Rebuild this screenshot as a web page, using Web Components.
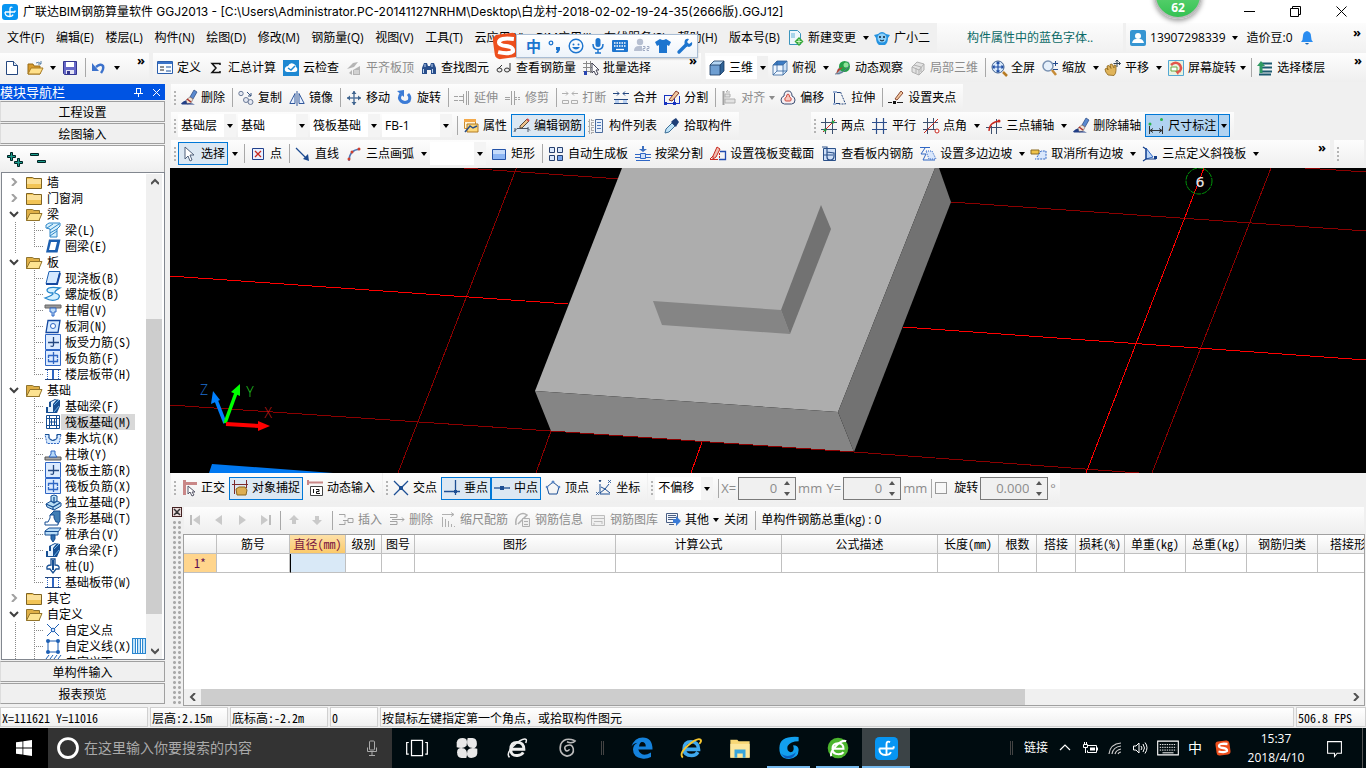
<!DOCTYPE html>
<html lang="zh-CN">
<head>
<meta charset="utf-8">
<title>广联达BIM钢筋算量软件 GGJ2013</title>
<style>
    body {
        margin: 0;
        height: 100vh;
        display: flex;
        flex-direction: column;
        overflow: hidden;
        background: #f0f0f0;
        color: #000;
        font: 12px/16px "Open Sans", "Noto Sans CJK SC", sans-serif;
        --song: "Noto Sans Mono CJK SC", "Noto Sans CJK SC", "Liberation Mono", monospace;
    }
    .bars {
        display: flex;
        flex-direction: column;
        gap: 1px;
        flex: none;
    }
    .bar {
        display: flex;
        gap: 4px;
        height: 27px;
    }
    .top {
        height: 29px;
        padding-bottom: 2px;
        align-items: stretch;
    }
    .first { min-width: 149px; }
    .second { min-width: 548px; }
    .work {
        flex: 1;
        min-height: 0;
        display: flex;
        gap: 6px;
    }
    .stage {
        flex: 1;
        min-width: 0;
        display: flex;
        flex-direction: column;
    }
    .wide { flex: 1; }
</style>
</head>
<body>

<title-bar>广联达BIM钢筋算量软件 GGJ2013 - [C:\Users\Administrator.PC-20141127NRHM\Desktop\白龙村-2018-02-02-19-24-35(2666版).GGJ12]</title-bar>

<menu-bar></menu-bar>

<div class="bar top">
    <tool-strip plain more class="first">
        <tool-button icon="new" label="新建"></tool-button>
        <tool-button icon="open" label="打开" menu></tool-button>
        <tool-button icon="save" label="保存"></tool-button>
        <tool-sep></tool-sep>
        <tool-button icon="undo" label="撤销" menu></tool-button>
    </tool-strip>
    <tool-strip plain more class="second">
        <tool-button icon="define">定义</tool-button>
        <tool-button icon="sum">汇总计算</tool-button>
        <tool-button icon="cloud">云检查</tool-button>
        <tool-button icon="flush" disabled>平齐板顶</tool-button>
        <tool-button icon="find">查找图元</tool-button>
        <tool-button icon="glasses">查看钢筋量</tool-button>
        <tool-button icon="batch">批量选择</tool-button>
    </tool-strip>
    <tool-strip plain more class="wide">
        <tool-button icon="cube" menu white>三维</tool-button>
        <tool-button icon="cubetop" menu>俯视</tool-button>
        <tool-button icon="orbit">动态观察</tool-button>
        <tool-button icon="part3d" disabled>局部三维</tool-button>
        <tool-sep></tool-sep>
        <tool-button icon="full">全屏</tool-button>
        <tool-button icon="zoom" menu>缩放</tool-button>
        <tool-button icon="pan" menu>平移</tool-button>
        <tool-button icon="spin" menu tight>屏幕旋转</tool-button>
        <tool-sep></tool-sep>
        <tool-button icon="floors">选择楼层</tool-button>
    </tool-strip>
</div>

<div class="work">
    <nav-panel></nav-panel>
    <main class="stage">
        <div class="bars">
            <div class="bar">
                <tool-strip>
                    <tool-button icon="brush">删除</tool-button>
                    <tool-sep></tool-sep>
                    <tool-button icon="copy">复制</tool-button>
                    <tool-button icon="mirror">镜像</tool-button>
                    <tool-sep></tool-sep>
                    <tool-button icon="move">移动</tool-button>
                    <tool-button icon="rotate">旋转</tool-button>
                    <tool-sep></tool-sep>
                    <tool-button icon="extend" disabled>延伸</tool-button>
                    <tool-button icon="trim" disabled>修剪</tool-button>
                    <tool-sep></tool-sep>
                    <tool-button icon="break" disabled>打断</tool-button>
                    <tool-button icon="merge">合并</tool-button>
                    <tool-button icon="split">分割</tool-button>
                    <tool-sep></tool-sep>
                    <tool-button icon="align" menu tight disabled>对齐</tool-button>
                    <tool-button icon="offset">偏移</tool-button>
                    <tool-button icon="stretch">拉伸</tool-button>
                    <tool-sep></tool-sep>
                    <tool-button icon="grip">设置夹点</tool-button>
                </tool-strip>
            </div>
            <div class="bar axes">
                <tool-strip>
                    <tool-combo label="楼层" value="基础层" size="58"></tool-combo>
                    <tool-combo label="构件类型" value="基础" size="70"></tool-combo>
                    <tool-combo label="构件" value="筏板基础" size="70"></tool-combo>
                    <tool-combo label="构件名称" value="FB-1" size="70"></tool-combo>
                    <tool-sep></tool-sep>
                    <tool-button icon="props">属性</tool-button>
                    <tool-button icon="editbar" checked>编辑钢筋</tool-button>
                    <tool-button icon="list">构件列表</tool-button>
                    <tool-button icon="pick">拾取构件</tool-button>
                </tool-strip>
                <tool-strip style="margin-left: 68px">
                    <tool-button icon="twopt">两点</tool-button>
                    <tool-button icon="parallel">平行</tool-button>
                    <tool-button icon="ptangle" menu>点角</tool-button>
                    <tool-button icon="arcaxis" menu>三点辅轴</tool-button>
                    <tool-button icon="brush">删除辅轴</tool-button>
                    <tool-button icon="dim" menu hot>尺寸标注</tool-button>
                </tool-strip>
            </div>
            <div class="bar">
                <tool-strip more style="flex: 1">
                    <tool-button icon="cursor" checked menu>选择</tool-button>
                    <tool-sep></tool-sep>
                    <tool-button icon="point">点</tool-button>
                    <tool-sep></tool-sep>
                    <tool-button icon="line">直线</tool-button>
                    <tool-button icon="arc" menu>三点画弧</tool-button>
                    <tool-combo label="画弧方式" value="" size="56"></tool-combo>
                    <tool-button icon="rect">矩形</tool-button>
                    <tool-sep></tool-sep>
                    <tool-button icon="autoslab">自动生成板</tool-button>
                    <tool-button icon="bybeam">按梁分割</tool-button>
                    <tool-button icon="section">设置筏板变截面</tool-button>
                    <tool-button icon="viewbar">查看板内钢筋</tool-button>
                    <tool-button icon="slope" menu>设置多边边坡</tool-button>
                    <tool-button icon="noslope" menu>取消所有边坡</tool-button>
                    <tool-button icon="tilt" menu>三点定义斜筏板</tool-button>
                </tool-strip>
                <tool-strip style="width: 30px; margin-right: 2px"></tool-strip>
            </div>
        </div>
        <model-view></model-view>
        <snap-bar></snap-bar>
        <rebar-dock></rebar-dock>
    </main>
</div>

<status-bar></status-bar>
<task-bar></task-bar>
<ime-bar></ime-bar>
<speed-ball>62</speed-ball>

<script>
// 图标库: 16x16 的 SVG 片段
const N = '#24477f', B = '#2f66c4', R = '#c8281e';
const BOX = `<path d="M.5.5h15v15H.5z" fill="#dcebff" stroke="${B}"/>`;
const BEAM = '<path d="M1 15v-6h3V4l6-3 5 1v6l-3 7z" fill="#174f93"/><path d="M3 14V9h3V4l6-3-4 5v8z" fill="#e5f3ff"/><path d="M9 14l5-6M9 7l5-5" stroke="#68b1e8"/>';
const ICONS = {
    app: '<rect width="16" height="16" rx="3" fill="#0795f2"/><path d="M8 12.500V5q0-2.500 2.500-1.500M3 8h10M3 8q0 4.500 4.500 4.500 3 0 3.500-2M13 8V6.500" fill="none" stroke="#fff" stroke-width="1.300"/>',
    new: `<path d="M2.500 1.500h7l4 4v9h-11z" fill="#fff" stroke="${N}"/><path d="M9.500 1.500v4h4" fill="#dfeaf8" stroke="${N}"/>`,
    open: '<path d="M1 4h5l1 2h6v8H1z" fill="#d79b2d" stroke="#986b14"/><path d="M1 14l3-6h12l-3 6z" fill="#ffe08a" stroke="#a87b22"/><path d="M9 3q3-2 5 1m0-3v3h-3" fill="none" stroke="#5780a8"/>',
    save: '<path d="M1.500 1.500h13v13h-12l-1-1z" fill="#6668c8" stroke="#34368f"/><path d="M4 2h8v5H4z" fill="#fff"/><path d="M4 10h8v4H4z" fill="#e4e4f4"/><path d="M5 11h3v3H5z" fill="#34368f"/>',
    undo: '<path d="M5 7q5-4 7-1 1 3-2 7" fill="none" stroke="#3c72cc" stroke-width="2.500"/><path d="M1 3v8h7z" fill="#3c72cc"/>',
    define: '<path d="M.5 1.500h15v12H.5z" fill="#f8fbff" stroke="#2b5fae"/><path d="M1 2h14v2H1z" fill="#3a73c8"/><path d="M3 7h4M3 10h4" stroke="#222"/><path d="M9 6h5v2H9zm0 4h5v2H9z" fill="#8aa6cc"/>',
    sum: '<path d="M12 5V3.500H4L8 8l-4 4.500h8V11" fill="none" stroke="#111" stroke-width="1.500"/>',
    cloud: '<path d="M0 0h16v16H0z" fill="#1e88d2"/><path d="M4 12q-3-1-2-4 1-2 3-2 2-4 6-2 2 1 2 3 2 1 1 4-1 1-3 1z" fill="#fff"/><path d="M5 8l3 2 4-4" fill="none" stroke="#1e88d2" stroke-width="1.500"/>',
    flush: '<path d="M1 9l6-6 5-1-4 5zM3 13l3-3v5zM7 15v-5l7-4v9z" fill="#9f9f9f"/><path d="M8 11h5M8 13h5" stroke="#eee"/>',
    find: '<path d="M1 14V8l2-5h3l1 3h2l1-3h3l2 5v6h-5v-4H6v4z" fill="#294f8c"/><path d="M2.500 9v4M11.500 9v4M4 4v3M11 4v3" stroke="#bcd2f0"/>',
    glasses: '<path d="M2 9l4-4M9 10q2-2 2 0M14 3v8" fill="none" stroke="#333"/><ellipse cx="3.500" cy="10" rx="2.500" ry="2" fill="#eee" stroke="#333"/><ellipse cx="11" cy="10" rx="2.500" ry="2" fill="#eee" stroke="#333"/>',
    batch: '<path d="M0 3.500h9M0 7.500h9M0 11.500h9M3.500 1v12M7.500 1v12" stroke="#888"/><path d="M1 11h3v4H1z" fill="#2744b0"/><path d="M9 3v10l2-2 2 4 2-1-2-4h3z" fill="#fff" stroke="#445"/>',
    cube: '<path d="M1 5h10v10H1z" fill="#6f9fd2"/><path d="M1 5l4-4h10l-4 4z" fill="#b5d6f4"/><path d="M11 5l4-4v10l-4 4z" fill="#2f6296"/><path d="M1 5h10v10H1zl4-4h10v10l-4 4M11 5l4-4" fill="none" stroke="#16395f" stroke-width=".8"/>',
    cubetop: '<path d="M1 5h10v10H1z" fill="#eef6ff"/><path d="M1 5l4-4h10l-4 4z" fill="#3c7cc4"/><path d="M11 5l4-4v10l-4 4z" fill="#cfe3f7"/><path d="M1 5h10v10H1zl4-4h10v10l-4 4M11 5l4-4M5 1v10h10M5 11l-4 4" fill="none" stroke="#31639c" stroke-width=".8"/>',
    orbit: '<ellipse cx="8" cy="8" rx="8.500" ry="3.500" transform="rotate(-45 8 8)" fill="#9bb0c4"/><circle cx="9.500" cy="6.500" r="5.500" fill="#24a148"/><circle cx="11" cy="5" r="2.500" fill="#8fe29b"/><path d="M1 14l7-7-5 2z" fill="#b9402c"/><path d="M0 14q8 0 14-8" fill="none" stroke="#5c7691"/>',
    part3d: '<path d="M2 7l5-5 7 2v6l-5 5-7-3z" fill="#ddd" stroke="#999"/><path d="M2 7l7 3 5-6M9 10v5M4 5l7 2v5M6 8v5" fill="none" stroke="#999"/>',
    full: '<circle cx="7" cy="7" r="6" fill="#d7e8fb" stroke="#3f5f8c"/><path d="M7 2v10M2 7h10M5.500 3.500L7 2l1.500 1.500M5.500 10.500L7 12l1.500-1.500M3.500 5.500L2 7l1.500 1.500M10.500 5.500L12 7l-1.500 1.500" fill="none" stroke="#1e4da5" stroke-width="1.200"/><path d="M12 12l4 4" stroke="#b77b24" stroke-width="2.500"/>',
    zoom: '<circle cx="6" cy="6" r="5" fill="#e6f0fb" stroke="#7b93b3" stroke-width="1.500"/><path d="M10 10l4 5" stroke="#c68b36" stroke-width="2.500"/><path d="M11 3.500h5M13.500 1v5M11 9.500h5" stroke="#234a8c"/>',
    pan: '<path d="M3 15q-3-3-3-6l2-1 1 2-1-4 2-.5 2 3-1-4 2-.500 2 4 0-3 2 .5v5q0 3-2 5z" fill="#e0b45a" stroke="#8d6519" stroke-width=".8"/><path d="M12 0v7M8.500 3.500h7M10.500 1.500L12 0l1.500 1.500M14 2l1.500 1.500L14 5" fill="none" stroke="#345"/>',
    spin: '<path d="M.5.5h15v15H.5z" fill="#e8f3e0" stroke="#53a7d4"/><path d="M3 5q4-4 8-1 4 4 0 8" fill="none" stroke="#e2544a" stroke-width="2.500"/><path d="M7 11l5-1-2 5z" fill="#e2544a"/><path d="M3 7h6v4H3z" fill="#fff" stroke="#6aa83e"/>',
    floors: '<path d="M4 3.500h11M4 7.500h11M4 11.500h11M2 14.500h12" stroke="#1d5a70" stroke-width="2"/><path d="M0 6l4-5 4 5H5.500v7h-3V6z" fill="#2f9a62"/>',
    brush: '<path d="M9 7l4-7 3 2-4 7z" fill="#5a8ad0" stroke="#28467e" stroke-width=".7"/><path d="M5 10l4-3 3 2-2 4-4 1z" fill="#f0e3d6" stroke="#7d6a67" stroke-width=".7"/><path d="M6 9l4 3" stroke="#b0302a" stroke-width="1.500"/><path d="M0 13.500q3-3 5-3l1 3q4-1 8 1H1z" fill="#223f86"/>',
    copy: '<g fill="#e5e9f2" stroke="#6c7b98"><circle cx="3" cy="3.500" r="2.200"/><circle cx="8" cy="10" r="2.500"/><circle cx="12.500" cy="12" r="2.500"/></g><path d="M9 2l4 4m0-3v3h-3" fill="none" stroke="#33507d"/>',
    mirror: '<path d="M.8 13.500H6v-10zM15.200 13.500H10v-10z" fill="#e8f1ff" stroke="#31589c"/><path d="M8 1v15" stroke="#31589c"/>',
    move: '<path d="M8 1v14M1 8h14" stroke="#55779f" stroke-width="1.500"/><path d="M5.500 4L8 1l2.500 3zM5.500 12L8 15l2.500-3zM4 5.500L1 8l3 2.500zM12 5.500L15 8l-3 2.500z" fill="#3f648f"/>',
    rotate: '<path d="M4 4q-3 4 0 7 4 3 8 0 2-4-1-7" fill="none" stroke="#3b7bd6" stroke-width="3"/><path d="M0 1l7-1v7z" fill="#3b7bd6"/>',
    extend: '<path d="M0 6.500h9M0 10.500h9" stroke="#888" stroke-dasharray="4 1"/><path d="M9.500 4v9M12.500 1v14M14.500 1v14" stroke="#888"/>',
    trim: '<path d="M0 7.500h5M0 9.500h5M6.500 1v14M9.500 1v14" stroke="#888"/><path d="M10 7.500h6M10 9.500h6" stroke="#888" stroke-dasharray="2 1"/>',
    break: '<path d="M0 3.500h6M4 1.500L6 3.500l-2 2M16 3.500h-6M12 1.500l-2 2 2 2M.5 10.500h6v3h-6zM9.500 10.500h6v3h-6z" fill="none" stroke="#999"/>',
    merge: `<path d="M0 3.500h6M4 1.500L6 3.500l-2 2M16 3.500h-6M12 1.500l-2 2 2 2" fill="none" stroke="${N}"/><path d="M1 9.500h14M1 13.500h14" stroke="${N}"/><path d="M2 10h4v3H2zm8 0h4v3h-4z" fill="#b8cff0"/>`,
    split: '<path d="M.5 5.500h12M.5 13.500h15M.5 5v9M10.500 6v8M15.500 6v8" stroke="#1633c0"/><path d="M5 10l7-9 3 2-7 8z" fill="#f3c9a0" stroke="#813a2c"/><path d="M0 12h3v3H0zm9 0h3v3H9z" fill="#1633c0"/>',
    align: '<path d="M2.500 1v14" stroke="#888" stroke-width="2"/><path d="M4 4h5v3H4zM4 9h10v4H4z" fill="#ddd" stroke="#999"/><path d="M9 2l-4 0 2-2" fill="none" stroke="#999"/>',
    offset: '<path d="M1 10q0-3 3-4 0-5 4-5t4 5q3 1 3 4 0 4-3.500 4h-7Q1 14 1 10z" fill="#f6eef2" stroke="#3b4e72"/><path d="M5 10q-1-2 1.500-3Q6.500 4 8 4t1.500 3q2.500 1 1.500 3 0 1-1 1H6q-1 0-1-1z" fill="#f8c9c0" stroke="#ce4a3e"/>',
    stretch: '<path d="M3.500 2.500v11H9M9 2.500H2" fill="none" stroke="#26477e"/><path d="M9.500 2l5 12H8" fill="none" stroke="#26477e" stroke-dasharray="2 1"/><path d="M2 1h4v2H2zm0 12h3v2H2z" fill="#9eb3d6"/>',
    grip: '<path d="M0 12.500h4m5 0h6" stroke="#222"/><path d="M5 11h3v3H5z" fill="#111"/><path d="M7 9l6-8 2 2-6 7z" fill="#f3c9a0" stroke="#8a4a34"/>',
    props: '<path d="M1.500 1.500h11v9h-11z" fill="#fff4da" stroke="#cf8d2c"/><path d="M1 1h12v3H1z" fill="#f3a94a"/><path d="M4 6h11v8H4z" fill="#fdd97c" stroke="#b37b22"/><path d="M2 14l5-6 3 2 4-2" fill="none" stroke="#2c4f86" stroke-width="1.500"/>',
    editbar: '<path d="M0 13.500l3-3 11 0 2 2M1 10v4M14 9v5" fill="none" stroke="#4a5668"/><path d="M6 8l7-7 2 2-7 7-2 0z" fill="#edc28c" stroke="#5d4a3a"/><path d="M13 1l2 2" stroke="#d04848" stroke-width="2"/>',
    list: '<path d="M0 2h4v3H0zm0 5h4v3H0zm0 5h4v3H0z" fill="none" stroke="#666" stroke-dasharray="1 1"/><path d="M6.500 1.500h7v13h-7z" fill="#e9f1fc" stroke="#4b6b9c"/><path d="M8 4.500h4M8 7.500h4M8 10.500h4" stroke="#4f79b8"/>',
    pick: '<path d="M1 15l1-4 6-6 3 3-6 6z" fill="#bfe3f8" stroke="#3c6e96"/><path d="M7 4l5 5 1-2 2-3-3-4-3 2z" fill="#1e3f78"/>',
    twopt: `<path d="M0 4.500h16M0 11.500h16M4.500 0v16M11.500 0v16" stroke="#3c506e"/><path d="M2 14L14 2" stroke="${R}"/><circle cx="4" cy="12" r="1.500" fill="#259b3c"/><circle cx="12" cy="4" r="1.500" fill="#259b3c"/>`,
    parallel: '<path d="M0 4.500h15M0 11.500h15M4.500 0v16M11.500 0v16" stroke="#2c4e8c" stroke-width="1.200"/>',
    ptangle: `<path d="M0 4.500h15M0 11.500h13M4.500 0v16M10.500 0v11" stroke="#3c506e"/><path d="M1 15L15 1" stroke="${R}"/><circle cx="14" cy="13" r="2" fill="#fff" stroke="${R}"/>`,
    arcaxis: `<path d="M0 9.500h16M10.500 1v15M5.500 8v8" stroke="#3c506e"/><path d="M3 13Q3 4 14 3" fill="none" stroke="${R}" stroke-width="1.300"/><circle cx="13" cy="3" r="1.500" fill="${R}"/>`,
    dim: '<path d="M1.500 8v8M14.500 8v8M2 12.500h12M5 10.500l-3 2 3 2M11 10.500l3 2-3 2" fill="none" stroke="#333"/><circle cx="2" cy="6" r="1.500" fill="#28b14a"/><circle cx="13.500" cy="1.500" r="1.500" fill="#28b14a"/>',
    cursor: '<path d="M4 1v12l3-3 2 5 2-1-2-5h4z" fill="#fff" stroke="#50617b"/>',
    point: `<path d="M2.500 2.500h11v11h-11z" fill="#eaf0ff" stroke="#22418c"/><path d="M5 5l6 6M11 5l-6 6" stroke="${R}" stroke-width="1.300"/>`,
    line: '<path d="M1 2l11 11" stroke="#1c4a90" stroke-width="1.300"/><path d="M14 15L8 13l5-5z" fill="#1c4a90"/>',
    arc: '<path d="M3 15Q3 4 14 3" fill="none" stroke="#4d74b5" stroke-width="1.400"/><circle cx="3" cy="13" r="1.500" fill="#cf4030"/><circle cx="6" cy="6" r="1.500" fill="#cf4030"/><circle cx="13" cy="3" r="1.500" fill="#cf4030"/>',
    rect: '<path d="M1.500 3.500h13v10h-13z" fill="#8db6f4" stroke="#2453a8"/><path d="M2 4h12v4H2z" fill="#c6dcfb"/>',
    autoslab: '<g fill="#dce9fc" stroke="#27406f"><path d="M1.500 1.500h5v5h-5zM9.500 1.500h5v5h-5zM1.500 9.500h5v5h-5z"/><path d="M9.500 9.500h5v5h-5z" fill="#79a7ee"/></g>',
    bybeam: `<path d="M0 8.500h5M0 11.500h5M11 8.500h5M11 11.500h5M1 14.500h14" stroke="${B}"/><path d="M7 0h2v3h3L8 6 4 3h3z" fill="#3c6fc0"/><path d="M5.500 7.500h5v5h-5z" fill="#cfe0f8" stroke="${B}"/>`,
    section: `<path d="M3 10l4-9 3 2-4 8-3 2z" fill="#f0bdb0" stroke="${R}"/><path d="M0 13.500h8M0 13l3-3" fill="none" stroke="${R}"/><path d="M10 5.500h5.500v8H9" fill="none" stroke="#224caf" stroke-width="1.300"/><path d="M9.500 7v6" stroke="${R}" stroke-dasharray="2 1"/>`,
    viewbar: '<path d="M2.500 2.500h12v12h-12z" fill="#cfe0f8" stroke="#2b5089"/><path d="M1 1h5v5M6 6v5q0 3 3 3 4 0 4-4V7l-7-1M3 9h9" fill="none" stroke="#2b5089" stroke-width="1.200"/>',
    slope: `<path d="M0 1.500h10M5 2L1 8h5l-3 6h12" fill="none" stroke="${B}"/><path d="M6 5h6l4 8H9z" fill="#d9e7fc" stroke="${B}" stroke-dasharray="1 1"/>`,
    noslope: `<path d="M0 4h8v4H0z" fill="#f2c44a" stroke="#8b6b20"/><path d="M6 11l4-6h5v8H4" fill="#d9e7fc" stroke="${B}" stroke-dasharray="2 1"/>`,
    tilt: '<path d="M4 2l7 9-7 2z" fill="#bcd7f8" stroke="#2f66c4"/><path d="M1 1l3 2v10l-3 2M4 13h10" fill="none" stroke="#123c86" stroke-width="1.200"/><path d="M12 10h3v3h-3z" fill="#123c86"/>',
    ortho: '<path d="M2 3.500h14M3.500 0v15" stroke="#c98787" stroke-width="3"/><path d="M7 6v8l2-2 2 4 2-1-2-3h3z" fill="#fff" stroke="#556"/>',
    osnap: '<path d="M2.500 0v14M14.500 0v8M0 4.500h16" stroke="#7d2a2a"/><path d="M5 15l-1-6 3-2 6 0 2 3-1 5z" fill="#dcae52" stroke="#8a641d"/>',
    dyn: '<path d="M3.500 6.500h12v9h-12z" fill="#fff" stroke="#444"/><path d="M0 2.500h16M1 0v5" stroke="#c98787" stroke-width="2"/><path d="M6.500 9v4M9 9.500h3v2H9.500v2H13" fill="none" stroke="#111"/>',
    cross: '<path d="M1 1l14 14M15 1L1 15" stroke="#1d4f94" stroke-width="1.300"/><path d="M6 6h4v4H6z" fill="#1d4f94"/>',
    perp: '<path d="M0 11.500h16M11.500 0v15" stroke="#1d4f94" stroke-width="1.300"/><path d="M10 10h3v3h-3z" fill="#1d4f94"/>',
    mid: '<path d="M0 8h16" stroke="#1d4f94" stroke-width="1.300"/><path d="M6 6h4v4H6z" fill="#1d4f94"/>',
    vertex: '<path d="M8 2l6 5-2 7H4L2 7z" fill="none" stroke="#1d4f94"/><circle cx="8" cy="2" r="1.500" fill="#5b87c5"/><circle cx="2" cy="7" r="1.300" fill="#5b87c5"/><circle cx="14" cy="7" r="1.300" fill="#5b87c5"/>',
    coord: '<path d="M4 4v10h10M5 7l4 2 4-5M4 13l5-4 5 4" fill="none" stroke="#1d4f94"/><path d="M0 12l3 3M3 12l-3 3M12 0l3 3M15 0l-3 3M3 0l1 2 1-2" stroke="#1d4f94" stroke-width=".8"/>',
    first: '<path d="M3 3v10" stroke="#aaa" stroke-width="2"/><path d="M12 3v10L5 8z" fill="#bbb"/>',
    prev: '<path d="M11 3v10L4 8z" fill="#bbb"/>',
    next: '<path d="M5 3v10l7-5z" fill="#bbb"/>',
    last: '<path d="M13 3v10" stroke="#aaa" stroke-width="2"/><path d="M4 3v10l7-5z" fill="#bbb"/>',
    up: '<path d="M8 3l5 5h-3v4H6V8H3z" fill="#bbb"/>',
    down: '<path d="M8 13L3 8h3V4h4v4h3z" fill="#bbb"/>',
    insert: '<path d="M1 2.500h6v3M1 12.500h6v-3M5 8.500h5M10 6.500h5v4h-5z" fill="none" stroke="#888"/>',
    remove: '<path d="M1 2.500h7v3H1M1 12.500h7v-3H1M3 7.500h12l-2-2M15 7.500l-2 2" fill="none" stroke="#888"/>',
    scale: '<path d="M2 2.500h12M11 .5l3 2-3 2M2.500 5v10M5.500 7v8M8.500 9v6M11.500 12v3M14.500 14v1" fill="none" stroke="#999"/>',
    info: '<path d="M1 13Q0 6 4 3t8 0L7 8M3 12l6-6" fill="none" stroke="#999" stroke-width="1.500"/><path d="M7.500 6.500h7v8h-7z" fill="#eee" stroke="#999"/><path d="M9 9.500h4M9 12.500h4" stroke="#999"/>',
    lib: '<path d="M1.500 3.500h13v10h-13zM1 6.500h13M4 9.500h8M4 11v2M12 9v3" fill="#eee" stroke="#aaa"/>',
    other: '<path d="M1.500 1.500h11v9h-11z" fill="#f4f7fc" stroke="#4a5f84"/><path d="M3 3.500h8M3 5.500h8M3 7.500h8M4 12.500h5" stroke="#4a5f84"/><path d="M8 7h3V4l5 5-5 5v-3H8z" fill="#3b7bd6"/>',
    newchg: '<path d="M1.500 .5h8l3 3v11h-11z" fill="#eef7fc" stroke="#3b95bd"/><path d="M3 3h4v5H3z" fill="#a7d5ea"/><path d="M11 7l4.500 4.500L11 16l-4.500-4.500z" fill="#36a93b"/><path d="M11 9v5M8.500 11.500h5" stroke="#d5f5c8"/>',
    robot: '<path d="M0 5l4-1q4-4 8 0l4 1-2 3q0 5-3 7H5Q2 13 2 8z" fill="#2593e0"/><circle cx="8" cy="8" r="4.500" fill="#8fd0f8"/><circle cx="6" cy="7" r="1" fill="#123"/><circle cx="10" cy="7" r="1" fill="#123"/><path d="M6 10q2 2 4 0" stroke="#123" fill="none"/>',
    user: '<rect width="16" height="16" rx="2" fill="#3695d2"/><circle cx="8" cy="6" r="3" fill="#fff"/><path d="M2 13q1-4 4-4h4q3 0 4 4z" fill="#fff"/>',
    bell: '<path d="M2 12q2-2 2-6 0-4 4-5 4 1 4 5 0 4 2 6z" fill="#2a8cf0"/><path d="M6 13q2 3 4 0z" fill="#1465b8"/>',
    // 构件树
    folder: '<path d="M.5 3.500h6l1.500 1h7.500v10H.5z" fill="#f2c455" stroke="#7f6424"/><path d="M1 5h14v5H1z" fill="#fbe099"/>',
    folderopen: '<path d="M.5 3.500h6l1.500 1h5.500v10H.5z" fill="#dfaf46" stroke="#8f7430"/><path d="M.5 14.500L4 7.500h12l-3 7z" fill="#fde391" stroke="#94752b"/>',
    t_beam: '<path d="M1 6V3l3-2h11v3l-3 3v8H5V7z" fill="#d7f0fc" stroke="#2f86c8"/><path d="M2 6l6-4M5 8l9-6M5 11l7-4M5 14l7-5" stroke="#2f86c8"/>',
    t_ring: '<path d="M1 14.500L4 1.500h11.500l-3 13z" fill="#1c5fb0"/><path d="M4 12L6 4h6l-2 8z" fill="#fff"/>',
    t_slab: '<path d="M1 13.500L4 1.500h11l-3 12z" fill="#d4e9ff" stroke="#1c5fb0"/><path d="M1 14h11l3-11" fill="none" stroke="#1448a0" stroke-width="2"/>',
    t_spiral: '<path d="M15 2Q3 0 2 4q0 3 6 3 1 2-8 5 7 4 13 1 4-4-3-6-1-2 5-5z" fill="#d6f2ff" stroke="#2386cc" stroke-width="1.300"/>',
    t_cap: '<path d="M0 3h16v3H0z" fill="#999" stroke="#666"/><path d="M5 6h6v4H9v4H7v-4H5z" fill="#bedcf8" stroke="#2f66c4"/>',
    t_hole: '<path d="M1 14.500L3 2.500h12l-2 12z" fill="#d4e9ff" stroke="#1448a0" stroke-width="1.300"/><circle cx="8" cy="8" r="2.500" fill="#fff" stroke="#2f66c4"/>',
    t_main: BOX + `<path d="M3 8.500h11M8.500 3v8q0 2-3 1" fill="none" stroke="${N}" stroke-width="1.300"/>`,
    t_neg: BOX + `<path d="M3 5.500h10M3 11.500h10M8.500 2v12M3.500 5v3M12.500 5v3M3.500 9v3M12.500 9v3" fill="none" stroke="${B}" stroke-width="1.300"/>`,
    t_band: `<path d="M0 3.500h16M0 13.500h16" stroke="${N}"/><path d="M2.500 4v9M13.500 4v9" stroke="${B}" stroke-dasharray="1 1"/><path d="M8 4v9" stroke="${B}" stroke-width="2"/>`,
    t_fbeam: BEAM,
    t_raft: '<path d="M1.500 1.500h13v13h-13z" fill="#fff" stroke="#174f93"/><path d="M4.500 1v14M11.500 1v14M1 4.500h14M1 11.500h14M6.500 4v8M9.500 4v8M4 8h8" fill="none" stroke="#174f93"/>',
    t_pit: '<path d="M0 4.500h4v3q4 5 8 0v-3h4l-2 9H2z" fill="#d7ebff" stroke="#2f66c4" stroke-dasharray="2 1"/><path d="M0 4.500h4v4q4 4 8 0v-4h4" fill="none" stroke="#174f93"/>',
    t_pier: '<path d="M0 11h16v3H0z" fill="#aaa" stroke="#555"/><path d="M4 11l2-3V5h4v3l2 3z" fill="#b9daf8" stroke="#2f66c4"/>',
    t_iso: '<path d="M1 10l5-3V2l3-1 3 1v5l4 2v3l-7 4-7-3z" fill="#b9def5" stroke="#174f93"/><path d="M6 7l3 2 3-2M9 9V3M1 10l7 3 7-4M8 13v3" fill="none" stroke="#174f93" stroke-width="1.300"/>',
    t_strip: '<path d="M5 5l4-4h6v10l-3 4z" fill="#3f7db4" stroke="#174f93"/><path d="M0 15v-3h3l2-4V5h4v3l2 4h2v3z" fill="#fff" stroke="#174f93"/>',
    t_pcap: '<path d="M0 5l4-3h12l-3 4v3H0z" fill="#b9ddf8" stroke="#174f93"/><path d="M0 5.500h13M6 9h4v4l-2 3-2-3z" fill="#2d6eb0" stroke="#174f93"/>',
    t_pile: '<path d="M6 1h4v6q5 0 4 4h-3l-3 4-3-4H2q-1-4 4-4z" fill="#fff" stroke="#174f93" stroke-width="1.300"/><path d="M8 2v10" stroke="#174f93" stroke-width="2"/>',
    t_pt: '<path d="M2 2l12 12M14 2L2 14" stroke="#1d5fb4"/><circle cx="8" cy="8" r="1.800" fill="#cfe3ff" stroke="#1d5fb4"/>',
    t_poly: '<path d="M3 3h10v11H3z" fill="#fff" stroke="#1d5fb4"/><g fill="#1d5fb4"><circle cx="3" cy="3" r="2"/><circle cx="13" cy="3" r="2"/><circle cx="3" cy="14" r="2"/><circle cx="13" cy="14" r="2"/></g>',
    t_face: '<path d="M1 5l3-4M5 5l3-4M9 5l3-4M13 5l3-4M2 15V6h12v9" fill="none" stroke="#1d5fb4"/>',
    allopen: '<path d="M.5 4.500h3v-3h2v3h3v2h-3v3h-2v-3h-3zM7.500 10.500h3v-3h2v3h3v2h-3v3h-2v-3h-3z" fill="#1b9c8c" stroke="#022"/>',
    allshut: '<path d="M.5 2.500h8v2h-8zM7.500 9.500h8v2h-8z" fill="#1b9c8c" stroke="#022"/>',
    // 任务栏
    win: '<path d="M0 2.300l6.500-.9v6.200H0zM7.300 1.300L16 0v7.600H7.300zM0 8.400h6.500v6.200L0 13.700zM7.300 8.400H16V16l-8.700-1.300z" fill="#fff"/>',
    ring: '<circle cx="8" cy="8" r="6.300" fill="none" stroke="#fff" stroke-width="1.900"/>',
    mic: '<rect x="5.500" y="1" width="5" height="9" rx="1" fill="none" stroke="#aaa"/><path d="M3.500 7.500v4h9v-4M8 12v3.500M5 15.500h6" fill="none" stroke="#aaa"/>',
    views: '<path d="M4 2.500h8v11H4zM2 4H.5v8.500H2M14 4h1.500v8.500H14" fill="none" stroke="#fff" stroke-width=".9"/>',
    pinwheel: '<g fill="#e9e9e9"><path d="M7.700 6Q6 9 .5 7.500V4Q1 .8 5 .8q4 0 2.700 5.200z"/><path d="M10 7.700Q7 6 8.500.8H12Q15.200 1 15.200 5q0 4-5.200 2.700z"/><path d="M8.300 10Q10 7 15.500 8.500V12q-.5 3.200-4.500 3.200-4 0-2.700-5.200z"/><path d="M6 8.300Q9 10 7.500 15.200H4Q.8 15 .8 11q0-4 5.200-2.700z"/></g><circle cx="8" cy="8" r="1" fill="#000c10"/>',
    ewhite: '<path d="M4 9h9.500q0-5.500-5.500-5.500-5 0-5 5.500t5.500 5q3 0 4.500-2.500" fill="none" stroke="#eee" stroke-width="2.300"/><path d="M2 15.500q-3-3 3-9Q12 0 15 1q1 0 0 3" fill="none" stroke="#eee" stroke-width="1.200"/>',
    swirl: '<path d="M14 2q-8-3-11 3-2 8 5 9.500 6-1 5-6-1-4-5-2.500-3 1-1 4 2 1 3-1M15 2q-3 3-7 1" fill="none" stroke="#bbb" stroke-width="1.300"/>',
    edge: '<path d="M1 7Q3 1 8.500 1 15 1 15 9H5.500q1 3 4 3.500 2 0 4.500-1.500v3q-3 1.500-6 1Q2 14 2 9q0-3 3-4.500Q2 5 1 7zm5 0h4.500q0-3-2.500-3-1.500 0-2 3z" fill="#1582dc"/>',
    ie: '<path d="M4 9h9.500q0-5.500-5.500-5.500-5 0-5 5T8.500 13.500q3 0 4.500-2.500" fill="none" stroke="#3fa9ee" stroke-width="2.600"/><path d="M2 15q-3-3 4-9Q13 0 15 2q1 1-1 3" fill="none" stroke="#f6c630" stroke-width="1.300"/>',
    files: '<path d="M1 2h5l1 1h8v12H1z" fill="#f8d775"/><path d="M1 5h14v10H1z" fill="#fde79d"/><path d="M4 15V9h8v6h-2v-3H6v3z" fill="#38a5dc"/>',
    glodon: '<path d="M15 0Q1-1 1 8q0 8 7 8 7-.5 7-6.500Q15 6 11 6q1.500 5-2 5-3-1-2-4.500Q9 3 15 3z" fill="#12a0ee"/><path d="M2 12q5 4 11-1-2 6-8 4z" fill="#0a5fc0"/>',
    green: '<circle cx="8" cy="8" r="7.500" fill="#4cb52e"/><path d="M4.500 8.500H12q0-4-4-4t-4 4 4.500 4q2.500 0 3.500-1.500M3 14q-1-3 4-8 4-4 7-3" fill="none" stroke="#fff" stroke-width="1.500"/>',
    chev: '<path d="M3 10l5-5 5 5" fill="none" stroke="#fff" stroke-width="1.200"/>',
    power: '<path d="M5 5.500h9.500v7h-9v-2M15.500 7.500v3" fill="none" stroke="#fff"/><path d="M8 7.500h5v3H8z" fill="#fff"/><path d="M2.500 2v2M4.500 2v2M1.500 4.500h4v3h-4zM3.500 8v5" fill="none" stroke="#fff"/>',
    wifi: '<path d="M2 14Q3 4 14 3M5 14q1-7 9-8M8 14q1-4 6-5M11 14q1-2 3-2" fill="none" stroke="#ccc" stroke-width="1.200"/>',
    sound: '<path d="M1.500 6h2.500l3-3v10L4 10H1.500zM9 6q2 2 0 4M11 4q3 4 0 8M13 2.500q4 5 0 11" fill="none" stroke="#fff"/>',
    keys: '<path d="M.5 3h15v10H.5z" fill="none" stroke="#fff" stroke-width=".8"/><path d="M2 5.500h12M2 7.500h12M2 9.500h12" stroke="#fff" stroke-width=".7" stroke-dasharray="1 .7"/><path d="M4 11.500h8" stroke="#fff" stroke-width=".7"/>',
    sogou: '<rect x="1" y="1" width="14" height="14" rx="3" transform="rotate(-8 8 8)" fill="#ee4f1d"/><path d="M12.500 4Q4 3 4 6q0 1.500 4 2 4.500.5 4 3-2 2-8.500.5" fill="none" stroke="#fff" stroke-width="2.300"/>',
    note: '<path d="M1.500 1.500h13v11h-4l-2.500 3v-3h-6.500z" fill="none" stroke="#fff"/>',
    // 输入法
    smile: '<circle cx="8" cy="8" r="6.800" fill="none" stroke="#1d75cf" stroke-width="1.400"/><circle cx="5.500" cy="6.500" r="1" fill="#1d75cf"/><circle cx="10.500" cy="6.500" r="1" fill="#1d75cf"/><path d="M4 9q4 5 8 0z" fill="#1d75cf"/>',
    punct: '<circle cx="4" cy="5" r="1.800" fill="none" stroke="#1d75cf" stroke-width="1.300"/><path d="M9 9h4v3l-2 3H9l1-3H9z" fill="#1d75cf"/>',
    voice: '<rect x="5.500" y="0" width="5" height="9" rx="2.500" fill="#1d75cf"/><path d="M3 6q0 5.500 5 5.500T13 6M8 12v3M5 15h6" fill="none" stroke="#1d75cf" stroke-width="1.500"/>',
    softkey: '<rect x="0" y="2" width="16" height="12" rx="1" fill="#1d75cf"/><path d="M2 5h12M2 8h12" stroke="#fff" stroke-width="1.500" stroke-dasharray="1.500 1"/><path d="M4 11.500h8" stroke="#fff" stroke-width="1.300"/>',
    people: '<circle cx="6" cy="4" r="3.200" fill="#b6bfd1"/><path d="M0 13q0-5 5-5h3v5z" fill="#b6bfd1"/><path d="M9 8.500h2v2H9v2h2M13 8.500h2v2h-2v2h2" fill="none" stroke="#a0abc3"/>',
    shirt: '<path d="M5 1q3 2 6 0l5 3-2 4-2-1v8H4V7L2 8 0 4z" fill="#1d75cf"/>',
    wrench: '<path d="M2 14l7-7" stroke="#1d75cf" stroke-width="3.400" stroke-linecap="round"/><path d="M15 4l-3 2-2-2 2-3Q8 0 7.500 4T12 9q4-1 3-5z" fill="#1d75cf"/>'
};

// 每个组件共用: 把样式和标签放进 shadow root
class Part extends HTMLElement {
    constructor() {
        super();
        this.attachShadow({ mode: 'open' });
    }
    connectedCallback() {
        this.shadowRoot.innerHTML = `<style>${this.css()}</style>${this.html()}`;
    }
    css() { return ':host { display: block; }'; }
    html() { return '<slot></slot>'; }
}

class UiIcon extends Part {
    css() { return ':host { display: block; flex: none; } svg { display: block; overflow: visible; }'; }
    html() {
        const s = this.getAttribute('size') || 16;
        return `<svg width="${s}" height="${s}" viewBox="0 0 16 16" aria-hidden="true">${ICONS[this.getAttribute('name')] || ''}</svg>`;
    }
}

class ToolSep extends Part {
    css() { return ':host { flex: none; width: 1px; height: 19px; margin: 0 1px 0 3px; background: #a8a8a8; }'; }
    html() { return ''; }
}

class ToolStrip extends Part {
    css() {
        return `
        :host {
            display: flex;
            align-items: center;
            gap: 1px;
            min-width: 0;
            box-sizing: border-box;
            padding-right: 4px;
            background: linear-gradient(#fdfdfd, #efefef);
        }
        :host([plain]) { padding-left: 1px; }
        .grip { flex: none; width: 2px; height: 14px; margin: 0 1px 0 3px;
            background: repeating-linear-gradient(#b4b4b4 0 2px, transparent 2px 4px); }
        .more { align-self: flex-start; margin-left: auto; padding: 0 0 0 4px;
            border: 0; background: none; font: bold 13px/14px "Open Sans", sans-serif; }`;
    }
    html() {
        return (this.hasAttribute('plain') ? '' : '<span class="grip"></span>') + '<slot></slot>' +
            (this.hasAttribute('more') ? '<button class="more" aria-label="更多">»</button>' : '');
    }
}

class ToolButton extends Part {
    css() {
        return `
        :host { display: flex; flex: none; height: 23px; }
        button {
            display: flex;
            align-items: center;
            gap: 4px;
            box-sizing: border-box;
            border: 0;
            padding: 0 3px;
            background: none;
            color: inherit;
            font: inherit;
            white-space: nowrap;
        }
        .drop { width: 11px; padding: 0; margin-left: 1px; justify-content: center; }
        .drop::before { content: ""; border: 3px solid transparent; border-top: 4px solid #000; border-bottom: 0; }
        :host([tight]) .drop { width: 8px; margin-left: 0; }
        :host([disabled]) button { color: #8c8c8c; }
        :host([disabled]) ui-icon { opacity: .75; }
        :host([disabled]) .drop::before { border-top-color: #8c8c8c; }
        :host([white]) { background: #fff; }
        :host([white]) .drop { background: #f0f0f0; }
        :host([checked]) .main { background: #dce8f3; border: 1px solid #0078d7; padding: 0 2px; }
        :host([hot]) button { background: #b1d3f1; border: 1px solid #0078d7; padding: 0 2px; }
        :host([hot]) .drop { border-left: 0; margin: 0; }`;
    }
    html() {
        const icon = this.getAttribute('icon');
        const label = this.getAttribute('label');
        const off = this.hasAttribute('disabled') ? 'disabled' : '';
        return `<button class="main" ${off} ${label ? `aria-label="${label}"` : ''}>` +
            (icon ? `<ui-icon name="${icon}"></ui-icon>` : '') + (label ? '' : '<slot></slot>') + '</button>' +
            (this.hasAttribute('menu') ? `<button class="drop" ${off} aria-label="展开"></button>` : '');
    }
}

class ToolCombo extends Part {
    css() {
        return `
        :host { position: relative; display: block; flex: none; height: 23px; background: #fff; margin-right: 1px; }
        select { appearance: none; width: 100%; height: 23px; padding: 0 12px 0 3px; border: 0;
            background: linear-gradient(90deg, #fff 0 calc(100% - 12px), #f4f4f4 0); color: #000; font: inherit; }
        i { position: absolute; right: 3px; top: 10px; border: 3px solid transparent; border-top: 4px solid #000; border-bottom: 0; pointer-events: none; }`;
    }
    html() {
        this.style.width = this.getAttribute('size') + 'px';
        return `<select aria-label="${this.getAttribute('label')}"><option>${this.getAttribute('value')}</option></select><i></i>`;
    }
}

class TitleBar extends Part {
    css() {
        return `
        :host { display: flex; flex: none; align-items: center; height: 23px; padding: 0 2px; gap: 5px; background: #fff; white-space: nowrap;
            font-family: Inter, "Noto Sans CJK SC", sans-serif; }
        .win { display: flex; margin-left: auto; }
        button { width: 46px; height: 22px; border: 0; padding: 0; background: none; display: grid; place-items: center; }
        svg { width: 11px; height: 11px; fill: none; stroke: #000; }`;
    }
    html() {
        return `<ui-icon name="app"></ui-icon><span><slot></slot></span>
        <div class="win">
            <button aria-label="最小化"><svg><path d="M0 5.500h11"/></svg></button>
            <button aria-label="还原"><svg><path d="M.5 2.500h8v8h-8zM2.500 2.500v-2h8v8h-2"/></svg></button>
            <button aria-label="关闭"><svg><path d="M.5.5l10 10M10.500.5l-10 10"/></svg></button>
        </div>`;
    }
}

class MenuBar extends Part {
    css() {
        return `
        :host { display: flex; flex: none; align-items: center; height: 30px; padding-left: 2px; overflow: hidden; white-space: nowrap; }
        nav { display: flex; justify-content: space-between; flex: 0 0 783px; }
        .item { border: 0; background: none; padding: 0 5px; font: inherit; color: inherit; }
        .panel { display: flex; align-items: center; align-self: stretch; box-sizing: border-box; height: 29px; background: linear-gradient(#fcfcfc, #f1f1f1); }
        a { color: #0b6a66; text-decoration: none; }
        .tip { flex: 0 0 186px; justify-content: center; margin: 0 3px 0 4px; }
        .acct { flex: 1; padding: 0 1px; gap: 1px; }
        .more { align-self: flex-start; margin-left: auto; padding: 2px 4px; border: 0; background: none; font: bold 13px/14px "Open Sans", sans-serif; }`;
    }
    html() {
        const menus = ['文件(F)', '编辑(E)', '楼层(L)', '构件(N)', '绘图(D)', '修改(M)', '钢筋量(Q)', '视图(V)', '工具(T)',
            '云应用(Y)', 'BIM应用(I)', '在线服务(S)', '帮助(H)', '版本号(B)'];
        return '<nav>' + menus.map(m => `<button class="item">${m}</button>`).join('') + `</nav>
        <tool-button icon="newchg" menu>新建变更</tool-button>
        <tool-button icon="robot">广小二</tool-button>
        <div class="panel tip"><a href="#">构件属性中的蓝色字体..</a></div>
        <div class="panel acct">
            <tool-button icon="user" menu>13907298339</tool-button>
            <button class="item">造价豆:0</button>
            <ui-icon name="bell"></ui-icon>
            <button class="more" aria-label="更多">»</button>
        </div>`;
    }
}

// 滚动条: --a 之前, --b 滑块, --c 之后
class ScrollBar extends Part {
    css() {
        return `
        :host { display: flex; flex: none; background: #f0f0f0; height: 16px; }
        :host([vertical]) { flex-direction: column; width: 16px; height: auto; }
        .a { flex: var(--a) 1 0; } .b { flex: var(--b) 1 0; background: #cdcdcd; } .c { flex: var(--c) 1 0; }
        button { flex: none; width: 17px; height: 16px; padding: 0; border: 0; background: none; display: grid; place-items: center; }
        svg { width: 8px; height: 8px; fill: none; stroke: #505050; stroke-width: 2; }`;
    }
    html() {
        const v = this.hasAttribute('vertical');
        const one = v ? 'M0 6l4-4 4 4' : 'M6 0L2 4l4 4';
        const two = v ? 'M0 2l4 4 4-4' : 'M2 0l4 4-4 4';
        return `<button aria-label="后退"><svg><path d="${one}"/></svg></button>
        <span class="a"></span><span class="b"></span><span class="c"></span>
        <button aria-label="前进"><svg><path d="${two}"/></svg></button>`;
    }
}

class TreeItem extends Part {
    css() {
        return `
        :host { display: flex; align-items: center; height: 16px; white-space: nowrap; }
        i { flex: none; width: 10px; height: 1px; margin-right: 1px;
            background: repeating-linear-gradient(90deg, #888 0 1px, transparent 1px 2px); }
        span { padding: 0 1px 0 4px; line-height: 16px; }
        :host([selected]) span { background: #d8d8d8; padding-right: 4px; }`;
    }
    html() { return `<i></i><ui-icon name="${this.getAttribute('icon')}"></ui-icon><span><slot></slot></span><slot name="badge"></slot>`; }
}

class TreeGroup extends Part {
    css() {
        return `
        :host { display: block; }
        button { display: flex; align-items: center; height: 16px; padding: 0 0 0 5px; border: 0; background: none; font: inherit; color: inherit; white-space: nowrap; }
        svg { width: 14px; height: 8px; fill: none; stroke: #404040; stroke-width: 2; }
        :host([shut]) svg { stroke: #a0a0a0; }
        ui-icon { margin: 0 5px 0 5px; }
        .kids { margin-left: 13px; padding-left: 18px;
            background: repeating-linear-gradient(#888 0 1px, transparent 1px 2px) 0 0 / 1px 100% no-repeat,
                        repeating-linear-gradient(#888 0 1px, transparent 1px 2px) 19px 0 / 1px calc(100% - 8px) no-repeat; }
        ::slotted(tree-item) { margin-left: 1px; }`;
    }
    html() {
        const shut = this.hasAttribute('shut');
        return `<button aria-expanded="${!shut}"><svg><path d="${shut ? 'M5 0l4 4-4 4' : 'M3 2l4 4 4-4'}"/></svg>
        <ui-icon name="${shut ? 'folder' : 'folderopen'}"></ui-icon>${this.getAttribute('label')}</button>
        <div class="kids"><slot></slot></div>`;
    }
}

const TREE = [
    ['墙'], ['门窗洞'],
    ['梁', 't_beam 梁(L)', 't_ring 圈梁(E)'],
    ['板', 't_slab 现浇板(B)', 't_spiral 螺旋板(B)', 't_cap 柱帽(V)', 't_hole 板洞(N)', 't_main 板受力筋(S)', 't_neg 板负筋(F)', 't_band 楼层板带(H)'],
    ['基础', 't_fbeam 基础梁(F)', 't_raft 筏板基础(M)', 't_pit 集水坑(K)', 't_pier 柱墩(Y)', 't_main 筏板主筋(R)', 't_neg 筏板负筋(X)',
        't_iso 独立基础(P)', 't_strip 条形基础(T)', 't_pcap 桩承台(V)', 't_fbeam 承台梁(F)', 't_pile 桩(U)', 't_band 基础板带(W)'],
    ['其它'],
    ['自定义', 't_pt 自定义点', 't_poly 自定义线(X)', 't_face 自定义面']
];

class NavPanel extends Part {
    css() {
        return `
        :host { display: flex; flex-direction: column; flex: 0 0 165px; box-sizing: border-box; padding-bottom: 2px; font-family: var(--song); }
        header { display: flex; align-items: center; height: 16px; background: #0054e3; color: #fff; font-family: "Open Sans", "Noto Sans CJK SC", sans-serif; }
        header b { flex: 1; font-weight: normal; font-size: 13px; }
        header button { width: 18px; height: 16px; padding: 0; border: 0; background: none; display: grid; place-items: center; }
        header svg { width: 9px; height: 9px; fill: none; stroke: #fff; }
        .page { flex: none; height: 21px; margin-top: 1px; padding: 0; border: 1px solid #a0a0a0; border-left-color: #ddd; background: #f0f0f0; font: inherit; color: inherit; }
        .tools { flex: none; display: flex; align-items: center; gap: 7px; height: 26px; padding-left: 7px; margin-top: 1px; border: 1px solid #a0a0a0; border-left: 0; border-bottom: 0; background: linear-gradient(#fff, #efefef); }
        .tree { flex: 1; min-height: 0; display: flex; margin-left: 1px; padding: 1px 2px 0 0; border: 1px solid #82878f; background: #fff; }
        .rows { flex: 1; min-width: 0; overflow: hidden; }
        scroll-bar { --a: 128; --b: 293; --c: 29; }
        .badge { box-sizing: border-box; width: 14px; height: 16px; border: 1px solid #2b86cf; background: linear-gradient(90deg, #bfe3fb 0 2px, #2b86cf 2px 3px, #fff 3px 4px, #2b86cf 4px 5px, #bfe3fb 5px 7px, #2b86cf 7px 8px, #fff 8px 9px, #2b86cf 9px 10px, #bfe3fb 10px); }`;
    }
    html() {
        const rows = TREE.map(([label, ...kids]) => `<tree-group label="${label}" ${kids.length ? '' : 'shut'}>` +
            kids.map(k => {
                const [icon, text] = k.split(' ');
                return `<tree-item icon="${icon}" ${text === '筏板基础(M)' ? 'selected' : ''}>${text}` +
                    (text === '自定义线(X)' ? '<i slot="badge" class="badge"></i>' : '') + '</tree-item>';
            }).join('') + '</tree-group>').join('');
        return `<header><b>模块导航栏</b>
            <button aria-label="固定"><svg><path d="M2.500 0v5M6.500 0v5M2 .5h5M0 5.500h9M4.500 6v3"/></svg></button>
            <button aria-label="关闭"><svg><path d="M1 1l7 7M8 1L1 8"/></svg></button></header>
        <button class="page">工程设置</button>
        <button class="page">绘图输入</button>
        <div class="tools"><ui-icon name="allopen"></ui-icon><ui-icon name="allshut"></ui-icon></div>
        <div class="tree"><div class="rows">${rows}</div><scroll-bar vertical></scroll-bar></div>
        <button class="page">单构件输入</button>
        <button class="page">报表预览</button>`;
    }
}

class ModelView extends Part {
    css() { return ':host { display: block; flex: 1; min-height: 0; margin-left: -1px; margin-top: 1px; background: #000; overflow: hidden; } svg { display: block; width: 100%; height: 100%; }'; }
    html() {
        return `<svg viewBox="170 168 1196 305" preserveAspectRatio="xMinYMin slice" role="img" aria-label="三维视图">
        <g stroke-width="1" fill="none" shape-rendering="crispEdges">
            <path stroke="#8b0000" d="M464 168L620 179M516.500 168L398 473M170 405L551 431M551 431L536 473M951 202L1366 231M1271 168L1152 473M1305 168L1366 172M854 452L1139 473"/>
            <path stroke="#f00" d="M170 276L568 304M903 327L1366 360M1204 168L1086 473M702 442L691 473"/>
        </g>
        <path d="M622 168H935L838 412L535 391z" fill="#adadad"/>
        <path d="M535 391L838 412L854 452L551 431z" fill="#858585"/>
        <path d="M935 168H939L951 202L854 452L838 412z" fill="#727272"/>
        <path d="M551 431L854 452" stroke="#8b0000" shape-rendering="crispEdges"/>
        <path d="M653 301L781 310L790 334L662 325z" fill="#858585"/>
        <path d="M821 205L831 229L790 334L781 310z" fill="#727272"/>
        <path d="M212 464L333 473H209z" fill="#0078f0"/>
        <circle cx="1199" cy="181" r="13" fill="none" stroke="#00960a" stroke-dasharray="5 1"/>
        <path d="M225 423L216 400" stroke="#0080ff" stroke-width="3.500"/><path d="M211 404L213 391L220 400z" fill="#0080ff"/>
        <path d="M225 423L236 393" stroke="#0f0" stroke-width="3.500"/><path d="M231 392L240 384V396z" fill="#0f0"/>
        <path d="M226 424L260 426" stroke="#f00" stroke-width="4"/><path d="M258 421L270 426L258 431z" fill="#f00"/>
        <g font-family="Open Sans" text-anchor="middle">
            <text x="204" y="395" font-size="14" font-weight="300" fill="#1e6fd0">Z</text>
            <text x="250" y="397" font-size="14" font-weight="300" fill="#20c820">Y</text>
            <text x="268" y="418" font-size="14" font-weight="300" fill="#c01818">X</text>
            <text x="1200" y="187" font-size="15" font-weight="600" fill="#ddd">6</text>
        </g></svg>`;
    }
}

class SpinBox extends Part {
    css() {
        return `
        :host { display: flex; }
        label { display: flex; align-items: center; gap: 2px; color: #8c8c8c; font-size: 13px; }
        .field { position: relative; display: flex; box-sizing: border-box; height: 23px; border: 1px solid #7a7a7a; background: #f0f0f0; }
        input { box-sizing: border-box; width: var(--w, 56px); border: 0; padding: 0 18px 0 0; background: none; text-align: right; color: #8c8c8c; font: inherit; }
        i { position: absolute; right: 5px; border: 3px solid transparent; }
        .up { top: 3px; border-top: 0; border-bottom: 4px solid #555; }
        .dn { bottom: 3px; border-bottom: 0; border-top: 4px solid #555; }`;
    }
    html() {
        return `<label>${this.getAttribute('label') || ''}<span class="field">
        <input value="${this.getAttribute('value')}" ${this.hasAttribute('name') ? `aria-label="${this.getAttribute('name')}"` : ''}><i class="up"></i><i class="dn"></i></span>${this.getAttribute('unit')}</label>`;
    }
}

class SnapBar extends Part {
    css() {
        return `
        :host { display: flex; flex: none; height: 30px; gap: 1px; margin-bottom: 2px; }
        .tight { display: flex; }
        .check { display: flex; align-items: center; gap: 7px; margin: 0 1px; }
        .check input { appearance: none; width: 12px; height: 12px; margin: 0; border: 1px solid #999; background: #f7f7f7; }`;
    }
    html() {
        return `
        <tool-strip>
            <tool-button icon="ortho">正交</tool-button>
            <tool-button icon="osnap" checked>对象捕捉</tool-button>
            <tool-button icon="dyn">动态输入</tool-button>
        </tool-strip>
        <tool-strip>
            <tool-button icon="cross">交点</tool-button>
            <div class="tight"><tool-button icon="perp" checked>垂点</tool-button><tool-button icon="mid" checked>中点</tool-button></div>
            <tool-button icon="vertex">顶点</tool-button>
            <tool-button icon="coord">坐标</tool-button>
        </tool-strip>
        <tool-strip>
            <tool-combo label="偏移方式" value="不偏移" size="58"></tool-combo>
            <tool-sep></tool-sep>
            <spin-box label="X=" value="0" unit="mm"></spin-box>
            <spin-box label="&nbsp;Y=" value="0" unit="mm"></spin-box>
            <tool-sep></tool-sep>
            <label class="check"><input type="checkbox">旋转</label>
            <spin-box name="旋转角度" value="0.000" unit="°" style="--w: 66px"></spin-box>
        </tool-strip>`;
    }
}

class RebarDock extends Part {
    css() {
        return `
        :host { display: flex; flex: 0 0 201px; min-height: 0; }
        .gutter { flex: none; width: 12px; display: flex; flex-direction: column; align-items: center; gap: 3px; padding-top: 2px; }
        .gutter button { width: 10px; height: 10px; padding: 0; border: 1px solid #422; background: #e9dada; display: grid; place-items: center; }
        .gutter svg { width: 8px; height: 8px; stroke: #333; stroke-width: 1.500; }
        .dots { flex: 1; width: 10px; background: linear-gradient(#c4c4c4, #c4c4c4) 0 0 / 0 0, radial-gradient(circle, #aaa 1px, transparent 2px) 0 0 / 5px 5px; }
        .body { flex: 1; min-width: 0; display: flex; flex-direction: column; }
        tool-strip { flex: none; height: 26px; margin: 2px 2px 1px 1px; }
        .total { padding: 0 3px; }
        .sheet { flex: 1; min-height: 0; display: flex; flex-direction: column; margin-right: 1px; border: 1px solid #a0a0a0; background: #fff; overflow: hidden; }
        table { table-layout: fixed; width: 1207px; border-collapse: separate; border-spacing: 0; font-family: var(--song); }
        th, td { box-sizing: border-box; padding: 0; height: 19px; border: solid #c0c0c0; border-width: 0 1px 1px 0; font-weight: normal; text-align: center; white-space: nowrap; overflow: hidden; line-height: 16px; }
        thead th { background: linear-gradient(#fff, #efefef); }
        thead .on { background: linear-gradient(#fde0a8, #fbca6a); color: #7a1540; }
        tbody th { background: #ffd58c; color: #5c0a50; }
        td.on { background: #d9e9f7; border-left: 1px solid #000; }
        scroll-bar { margin-top: auto; --a: 0; --b: 823; --c: 322; }`;
    }
    html() {
        const cols = [['', 33], ['筋号', 73], ['直径(mm)', 56], ['级别', 36], ['图号', 33], ['图形', 201], ['计算公式', 166], ['公式描述', 156],
            ['长度(mm)', 61], ['根数', 38], ['搭接', 39], ['损耗(%)', 49], ['单重(kg)', 61], ['总重(kg)', 61], ['钢筋归类', 71], ['搭接形式', 73]];
        return `
        <div class="gutter"><button aria-label="关闭"><svg><path d="M1 1l6 6M7 1L1 7"/></svg></button><span class="dots"></span></div>
        <div class="body">
            <tool-strip plain>
                ${['first', 'prev', 'next', 'last'].map(i => `<tool-button icon="${i}" label="${i}" disabled></tool-button>`).join('')}
                <tool-sep></tool-sep>
                <tool-button icon="up" label="上移" disabled></tool-button>
                <tool-button icon="down" label="下移" disabled></tool-button>
                <tool-sep></tool-sep>
                <tool-button icon="insert" disabled>插入</tool-button>
                <tool-button icon="remove" disabled>删除</tool-button>
                <tool-button icon="scale" disabled>缩尺配筋</tool-button>
                <tool-button icon="info" disabled>钢筋信息</tool-button>
                <tool-button icon="lib" disabled>钢筋图库</tool-button>
                <tool-button icon="other" menu tight>其他</tool-button>
                <tool-button>关闭</tool-button>
                <tool-sep></tool-sep>
                <span class="total">单构件钢筋总重(kg) : 0</span>
            </tool-strip>
            <div class="sheet">
                <table>
                    <colgroup>${cols.map(c => `<col style="width: ${c[1]}px">`).join('')}</colgroup>
                    <thead><tr>${cols.map((c, i) => `<th ${i === 2 ? 'class="on"' : ''}>${c[0]}</th>`).join('')}</tr></thead>
                    <tbody><tr><th>1*</th>${cols.slice(1).map((c, i) => `<td ${i === 1 ? 'class="on"' : ''}></td>`).join('')}</tr></tbody>
                </table>
                <scroll-bar></scroll-bar>
            </div>
        </div>`;
    }
}

class StatusBar extends Part {
    css() {
        return `
        :host { display: flex; flex: none; box-sizing: border-box; height: 22px; padding: 1px 0; gap: 2px; background: #f0f0f0; font-family: var(--song); white-space: nowrap; }
        span { flex: none; box-sizing: border-box; padding: 2px 1px 0; border: 1px solid #d0d0d0; background: linear-gradient(#fff, #f0f0f0); }
        .hint { flex: 1; }`;
    }
    html() {
        const cells = [['X=111621 Y=11016', 148], ['层高:2.15m', 78], ['底标高:-2.2m', 98], ['0', 48]];
        return cells.map(c => `<span style="width: ${c[1]}px">${c[0]}</span>`).join('') +
            '<span class="hint">按鼠标左键指定第一个角点，或拾取构件图元</span><span style="width: 70px">506.8 FPS</span>';
    }
}

class TaskBar extends Part {
    css() {
        return `
        :host { display: flex; flex: none; height: 40px; background: #000c10; color: #fff; }
        button { display: grid; place-items: center; flex: none; box-sizing: border-box; width: 50px; padding: 0; border: 0; background: none; color: inherit; font: inherit; }
        .start { width: 48px; background: #000; }
        .search { display: flex; align-items: center; flex: 0 0 344px; box-sizing: border-box; padding: 0 12px 0 8px; gap: 4px; background: #333; }
        input { flex: 1; min-width: 0; padding: 0; border: 0; background: none; color: #aaa; font: inherit; font-size: 14px; }
        input::placeholder { color: #aaa; opacity: 1; }
        .bar { align-self: center; width: 3px; height: 14px; margin: 0 13px 0 9px; box-sizing: border-box; border: solid #444; border-width: 0 1px; }
        .app { width: 49px; }
        .run { border-bottom: 2px solid #76b9ed; padding: 2px 0 0; margin: 0 3px; width: 43px; }
        .active { width: 48px; background: #3b4346; border-bottom: 2px solid #76b9ed; padding-top: 2px; }
        .tray { display: flex; align-items: center; margin-left: auto; gap: 9px; }
        .tray .bar { margin: 0 2px 0 0; }
        .tray .im { margin: 0 4px; }
        .clock { text-align: center; line-height: 19px; width: 64px; }
        .note { width: 34px; height: 40px; }
        .edge { width: 4px; align-self: stretch; border-left: 1px solid #555; margin-left: 2px; box-sizing: border-box; }
        .cn { font-size: 14px; }`;
    }
    html() {
        const b = (icon, size, cls, label) => `<button class="${cls}" aria-label="${label}"><ui-icon name="${icon}" size="${size}"></ui-icon></button>`;
        return b('win', 16, 'start', '开始') + `
        <div class="search"><ui-icon name="ring" size="24"></ui-icon>
            <input aria-label="搜索" placeholder="在这里输入你要搜索的内容"><ui-icon name="mic"></ui-icon></div>` +
            b('views', 22, '', '任务视图') + b('pinwheel', 22, '', '应用') + b('ewhite', 20, '', '浏览器') + b('swirl', 20, '', '加速') +
            '<span class="bar"></span>' + b('edge', 24, 'app', 'Edge') + b('ie', 22, 'app', 'IE') + b('files', 22, 'app', '文件') +
            b('glodon', 22, 'run', '广联达') + b('green', 22, 'run', '浏览器') + b('app', 23, 'active', 'GGJ2013') + `
        <div class="tray"><span class="bar"></span><span>链接</span><ui-icon name="chev"></ui-icon><ui-icon name="power"></ui-icon>
            <ui-icon name="wifi"></ui-icon><ui-icon name="sound"></ui-icon><ui-icon name="keys" size="22"></ui-icon>
            <span class="cn">中</span><ui-icon name="sogou" class="im"></ui-icon>
            <time class="clock">15:37<br>2018/4/10</time>
            ${b('note', 17, 'note', '通知')}<span class="edge"></span></div>`;
    }
}

// 输入法浮动条
class ImeBar extends Part {
    css() {
        return `
        :host { position: absolute; left: 492px; top: 32px; display: flex; align-items: center; width: 206px; height: 28px; }
        .box { display: flex; align-items: center; justify-content: space-between; flex: 1; box-sizing: border-box; height: 24px; margin-left: -4px; padding: 0 4px 0 9px;
            background: linear-gradient(#fff, #edf3fa); border: 1px solid #a9bdd4; box-shadow: 0 1px 2px #0003; }
        b { color: #1d75cf; font-size: 15px; }`;
    }
    html() {
        return `<ui-icon name="sogou" size="28"></ui-icon><div class="box"><b>中</b>` +
            ['punct', 'smile', 'voice', 'softkey', 'people', 'shirt', 'wrench'].map(i => `<ui-icon name="${i}"></ui-icon>`).join('') + '</div>';
    }
}

class SpeedBall extends Part {
    css() {
        return `
        :host { position: absolute; left: 1154px; top: -29px; width: 44px; height: 44px; border: 2px solid #bbb; border-radius: 50%;
            display: flex; align-items: flex-end; justify-content: center; box-sizing: content-box; padding: 0;
            background: linear-gradient(#7fe08a, #34c152); color: #fff; font-weight: bold; box-shadow: 0 2px 5px #0006; }
        span { padding-bottom: 1px; }`;
    }
    html() { return '<span><slot></slot></span>'; }
}

customElements.define('ui-icon', UiIcon);
customElements.define('tool-sep', ToolSep);
customElements.define('tool-strip', ToolStrip);
customElements.define('tool-button', ToolButton);
customElements.define('tool-combo', ToolCombo);
customElements.define('scroll-bar', ScrollBar);
customElements.define('spin-box', SpinBox);
customElements.define('tree-item', TreeItem);
customElements.define('tree-group', TreeGroup);
customElements.define('title-bar', TitleBar);
customElements.define('menu-bar', MenuBar);
customElements.define('nav-panel', NavPanel);
customElements.define('model-view', ModelView);
customElements.define('snap-bar', SnapBar);
customElements.define('rebar-dock', RebarDock);
customElements.define('status-bar', StatusBar);
customElements.define('task-bar', TaskBar);
customElements.define('ime-bar', ImeBar);
customElements.define('speed-ball', SpeedBall);
</script>
</body>
</html>
